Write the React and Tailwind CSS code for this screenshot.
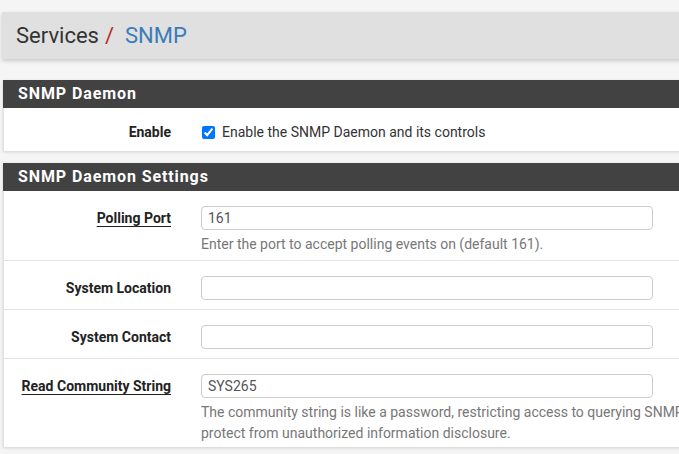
import React from "react";

const font = { fontFamily: "Roboto, 'Liberation Sans', sans-serif" };

function Row({ label, underline, value, help, last, pb }) {
  return (
    <div className={`flex ${last ? "" : "border-b border-[#e3e3e3]"} pt-[15px] ${pb}`}>
      <div className="w-[185px] shrink-0 pr-[18px] text-right">
        <span
          className={`text-[14px] font-bold leading-[24px] text-[#222] ${underline ? "underline underline-offset-[3px]" : ""}`}
        >
          {label}
        </span>
      </div>
      <div className="pl-[12px] flex-1 min-w-0">
        <div className="w-[452px] h-[24px] border border-[#cccccc] rounded-[4px] bg-white px-[6px] text-[14px] leading-[22px] text-[#555]">
          {value}
        </div>
        {help && (
          <div className="mt-[4px] text-[14px] leading-[21px] text-[#777] whitespace-nowrap">
            {help}
          </div>
        )}
      </div>
    </div>
  );
}

export default function App() {
  return (
    <div className="w-[679px] h-[454px] overflow-hidden bg-[#f5f5f5]" style={font}>
      <div className="pt-[12px] pl-[2px]">
        <div className="w-[900px] h-[47px] bg-[#e0e0e0] shadow-[0_2px_4px_rgba(0,0,0,0.18)] flex items-center pl-[14px]">
          <span className="text-[22px] text-[#333]">Services</span>
          <span className="text-[22px] text-[#b52c2c] ml-[6px]">/</span>
          <span className="text-[22px] text-[#3a7cb8] ml-[11px]">SNMP</span>
        </div>
      </div>

      <div className="mt-[21px] ml-[3px] w-[900px] bg-white shadow-[0_1px_3px_rgba(0,0,0,0.15)]">
        <div className="h-[28px] bg-[#424242] pl-[15px] flex items-center">
          <span className="text-[16px] font-bold tracking-[0.9px] text-white">SNMP Daemon</span>
        </div>
        <div className="flex pt-[12px] pb-[7px] border-x border-[#e3e3e3]">
          <div className="w-[185px] shrink-0 pr-[18px] text-right">
            <span className="text-[14px] font-bold leading-[24px] text-[#222]">Enable</span>
          </div>
          <div className="pl-[13px] flex items-center h-[24px]">
            <input type="checkbox" defaultChecked className="w-[13px] h-[13px] m-0 accent-[#0075ff]" />
            <span className="ml-[7px] text-[14px] text-[#333]">Enable the SNMP Daemon and its controls</span>
          </div>
        </div>
      </div>

      <div className="mt-[12px] ml-[3px] w-[900px] bg-white shadow-[0_1px_3px_rgba(0,0,0,0.15)]">
        <div className="h-[28px] bg-[#424242] pl-[15px] flex items-center">
          <span className="text-[16px] font-bold tracking-[0.9px] text-white">SNMP Daemon Settings</span>
        </div>
        <div className="border-x border-[#e3e3e3]">
          <Row
            label="Polling Port"
            underline
            value="161"
            help="Enter the port to accept polling events on (default 161)."
            pb="pb-[5px]"
          />
          <Row label="System Location" value="" pb="pb-[9px]" />
          <Row label="System Contact" value="" pb="pb-[9px]" />
          <Row
            label="Read Community String"
            underline
            value="SYS265"
            last
            pb="pb-[3px]"
            help={
              <>
                The community string is like a password, restricting access to querying SNMP to hosts knowing the community string. Use a strong value here to
                <br />
                protect from unauthorized information disclosure.
              </>
            }
          />
        </div>
      </div>
    </div>
  );
}
